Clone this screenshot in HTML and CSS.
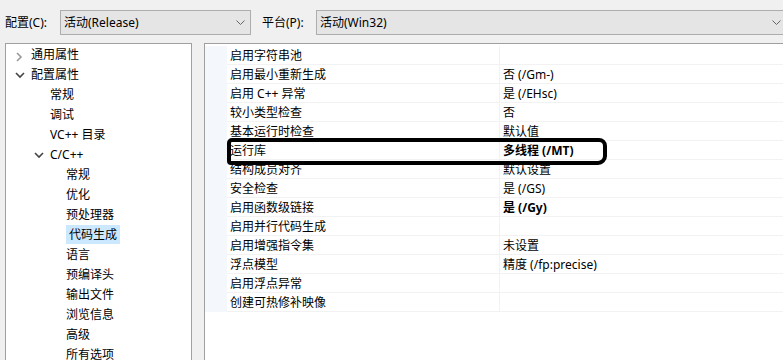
FILE: index.html
```html
<!DOCTYPE html>
<html lang="zh-CN">
<head>
  <meta charset="UTF-8">
  <title>属性页</title>
  <link rel="stylesheet" href="styles.css">
</head>
<body>

  <div class="toolbar">
    <span class="label">配置(C):</span>
    <div class="combo combo-config">
      <span>活动(Release)</span>
      <svg class="arrow" width="9" height="6" viewBox="0 0 9 6"><path d="M0.5 0.5 L4.5 4.5 L8.5 0.5" fill="none" stroke="#666" stroke-width="1"/></svg>
    </div>
    <span class="label">平台(P):</span>
    <div class="combo combo-platform">
      <span>活动(Win32)</span>
      <svg class="arrow" width="9" height="6" viewBox="0 0 9 6"><path d="M0.5 0.5 L4.5 4.5 L8.5 0.5" fill="none" stroke="#666" stroke-width="1"/></svg>
    </div>
  </div>

  <div class="main">
    <div class="tree">
      <div class="node lvl0"><svg class="tw" width="7" height="10" viewBox="0 0 7 10"><path d="M1 1 L5 5 L1 9" fill="none" stroke="#999" stroke-width="1.6"/></svg>通用属性</div>
      <div class="node lvl0"><svg class="tw" width="10" height="7" viewBox="0 0 10 7"><path d="M1 1 L5 5 L9 1" fill="none" stroke="#444" stroke-width="1.6"/></svg>配置属性</div>
      <div class="node lvl1">常规</div>
      <div class="node lvl1">调试</div>
      <div class="node lvl1">VC++ 目录</div>
      <div class="node lvl1 open"><svg class="tw" width="10" height="7" viewBox="0 0 10 7"><path d="M1 1 L5 5 L9 1" fill="none" stroke="#444" stroke-width="1.6"/></svg>C/C++</div>
      <div class="node lvl2">常规</div>
      <div class="node lvl2">优化</div>
      <div class="node lvl2">预处理器</div>
      <div class="node lvl2"><span class="selected">代码生成</span></div>
      <div class="node lvl2">语言</div>
      <div class="node lvl2">预编译头</div>
      <div class="node lvl2">输出文件</div>
      <div class="node lvl2">浏览信息</div>
      <div class="node lvl2">高级</div>
      <div class="node lvl2">所有选项</div>
    </div>

    <div class="grid">
      <div class="row"><span class="name">启用字符串池</span><span class="value"></span></div>
      <div class="row"><span class="name">启用最小重新生成</span><span class="value">否 (/Gm-)</span></div>
      <div class="row"><span class="name">启用 C++ 异常</span><span class="value">是 (/EHsc)</span></div>
      <div class="row"><span class="name">较小类型检查</span><span class="value">否</span></div>
      <div class="row"><span class="name">基本运行时检查</span><span class="value">默认值</span></div>
      <div class="row"><span class="name">运行库</span><span class="value bold">多线程 (/MT)</span></div>
      <div class="row"><span class="name">结构成员对齐</span><span class="value">默认设置</span></div>
      <div class="row"><span class="name">安全检查</span><span class="value">是 (/GS)</span></div>
      <div class="row"><span class="name">启用函数级链接</span><span class="value bold">是 (/Gy)</span></div>
      <div class="row"><span class="name">启用并行代码生成</span><span class="value"></span></div>
      <div class="row"><span class="name">启用增强指令集</span><span class="value">未设置</span></div>
      <div class="row"><span class="name">浮点模型</span><span class="value">精度 (/fp:precise)</span></div>
      <div class="row"><span class="name">启用浮点异常</span><span class="value"></span></div>
      <div class="row"><span class="name">创建可热修补映像</span><span class="value"></span></div>
      <div class="mark"></div>
    </div>
  </div>

</body>
</html>
```

FILE: styles.css
```css
body {
  font-family: "Noto Sans", "Noto Sans CJK SC", sans-serif;
  font-size: 12px;
  color: #000;
  background-color: #f0f0f0;
  margin: 0;
  height: 360px;
  overflow: hidden;
}

.toolbar {
  display: flex;
  align-items: center;
  height: 43px;
  padding-left: 5px;
}

.label {
  width: 55px;
}

.label + .combo + .label {
  margin-left: 11px;
  width: 54px;
}

.combo {
  display: flex;
  align-items: center;
  justify-content: space-between;
  box-sizing: border-box;
  height: 25px;
  margin-top: 1px;
  padding: 0 5px 0 3px;
  background: #e5e5e5;
  border: 1px solid #adadad;
}

.combo-config {
  width: 191px;
}

.combo-platform {
  flex: 1;
  margin-right: -4px;
}

.arrow {
  margin-top: 1px;
}

.main {
  display: flex;
  gap: 12px;
  padding-left: 5px;
}

.tree {
  box-sizing: border-box;
  width: 187px;
  height: 330px;
  padding-top: 1px;
  background: #fff;
  border: 1px solid #a0a0a0;
  border-bottom: none;
}

.node {
  position: relative;
  height: 20px;
  line-height: 20px;
  white-space: nowrap;
}

.lvl0 {
  padding-left: 25px;
}

.lvl1 {
  padding-left: 44px;
}

.lvl2 {
  padding-left: 60px;
}

.tw {
  position: absolute;
  top: 7px;
}

.lvl0 .tw {
  left: 10px;
}

.lvl0 .tw[width="10"] {
  left: 9px;
  top: 7px;
}

.lvl1 .tw {
  left: 28px;
}

.selected {
  display: inline-block;
  height: 19px;
  line-height: 19px;
  padding: 0 3px;
  background: #cce8ff;
}

.grid {
  position: relative;
  flex: 1;
  height: 330px;
  padding-top: 2px;
  background: #fff;
  border: 1px solid #a0a0a0;
  border-right: none;
  border-bottom: none;
}

.row {
  display: flex;
  height: 19px;
  line-height: 20px;
  border-bottom: 1px solid #f2f2f2;
  box-sizing: border-box;
  margin-left: 22px;
  position: relative;
}

.row::before {
  content: "";
  position: absolute;
  left: -22px;
  top: 0;
  width: 22px;
  height: 19px;
  background: #f4f7fb;
}

.name {
  width: 269px;
  padding-left: 3px;
  border-right: 1px solid #f2f2f2;
  white-space: nowrap;
}

.value {
  padding-left: 3px;
  white-space: nowrap;
}

.bold {
  font-weight: bold;
}

.mark {
  position: absolute;
  left: 22px;
  top: 94px;
  width: 372px;
  height: 19px;
  border: 4px solid #000;
  border-radius: 5px 8px 9px 4px;
}
```
